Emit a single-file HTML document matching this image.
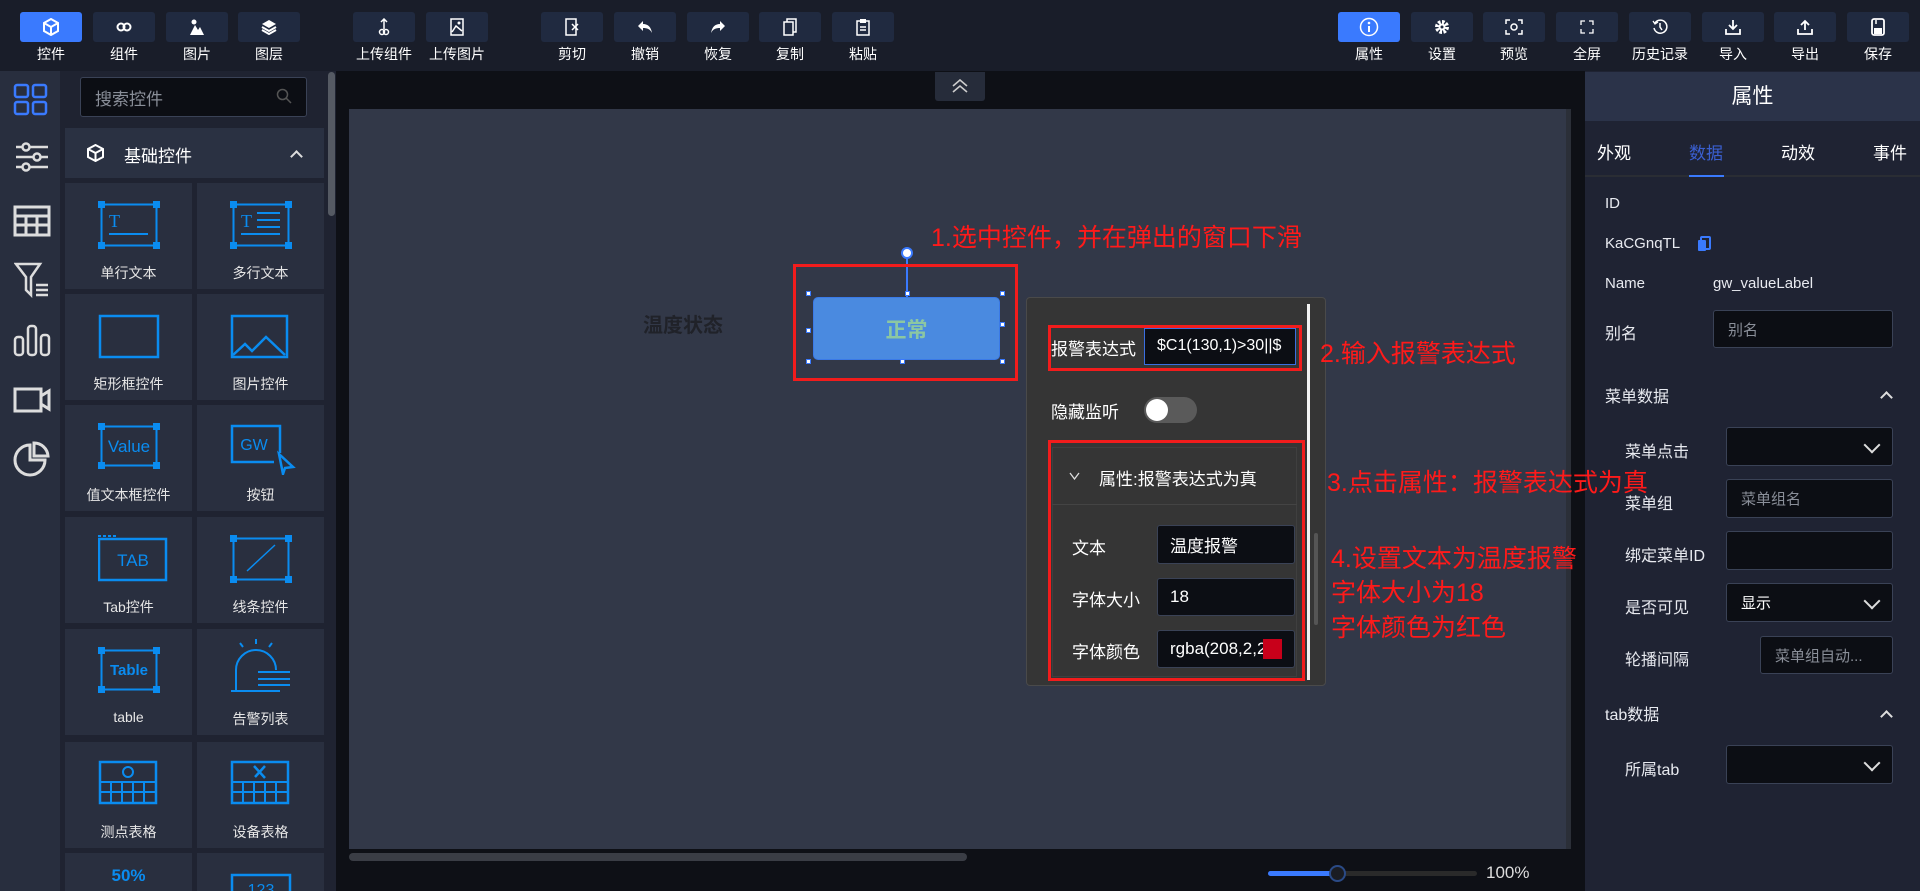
<!DOCTYPE html>
<html><head><meta charset="utf-8">
<style>
*{margin:0;padding:0;box-sizing:border-box}
html{width:1920px;height:891px;overflow:hidden}
body{width:1920px;height:891px;overflow:hidden;background:#0e1016;font-family:"Liberation Sans","Noto Sans CJK SC",sans-serif;color:#e8eaf0;position:relative;font-size:15px}
.a{position:absolute}
.tb{position:absolute;left:0;top:0;width:1920px;height:71px;background:#191d29}
.btn{position:absolute;top:12px;width:62px;height:30px;background:#202a40;border-radius:3px;display:flex;align-items:center;justify-content:center}
.btn.on{background:#3a7afe}
.lbl{position:absolute;top:44px;width:80px;text-align:center;font-size:14px;color:#fff}
.rail{position:absolute;left:0;top:71px;width:60px;height:820px;background:#282e3e}
.pan{position:absolute;left:60px;top:71px;width:276px;height:820px;background:#1f2331;overflow:hidden}
.card{position:absolute;width:127px;height:106px;background:#292f3f}
.card svg{position:absolute;left:33px;top:18px}
.card span{position:absolute;left:0;right:0;top:80px;text-align:center;font-size:14px;color:#e6e6e6}
.rp{position:absolute;left:1585px;top:71px;width:335px;height:820px;background:#1f2333}
.inp{position:absolute;background:#0c0e14;border:1px solid #3a4256;border-radius:3px;font-size:15px;color:#8a8f99;padding-left:12px;display:flex;align-items:center}
.red{position:absolute;border:3px solid #f21c1c}
.ann{position:absolute;color:#ff1a1a;font-size:25px;white-space:nowrap;line-height:1}
.chev{position:absolute;right:14px;top:11px;width:12px;height:12px;border-right:2px solid #ddd;border-bottom:2px solid #ddd;transform:rotate(45deg)}
.up{position:absolute;width:9px;height:9px;border-left:2px solid #ddd;border-top:2px solid #ddd;transform:rotate(45deg)}
.h{position:absolute;width:5px;height:5px;background:#fff;border:1px solid #3a7afe}
</style></head><body>
<div class="tb"></div>
<div class="btn on" style="left:20px"><svg width="16" height="18" viewBox="0 0 16 18"><path d="M8 1 L15 5 V13 L8 17 L1 13 V5 Z M1 5 L8 9 L15 5 M8 9 V17" fill="none" stroke="#fff" stroke-width="2"/></svg></div>
<div class="btn" style="left:93px"><svg width="16" height="10"><circle cx="5" cy="5" r="3.5" fill="none" stroke="#fff" stroke-width="2"/><circle cx="11" cy="5" r="3.5" fill="none" stroke="#fff" stroke-width="2"/></svg></div>
<div class="btn" style="left:166px"><svg width="14" height="16"><circle cx="4" cy="3" r="2.5" fill="#fff"/><path d="M0 16 L5 6 L8 11 L10 8 L14 16Z" fill="#fff"/></svg></div>
<div class="btn" style="left:238px"><svg width="16" height="16"><path d="M8 1 L15 5 L8 9 L1 5Z" fill="#fff"/><path d="M1 8 L8 12 L15 8 M1 11 L8 15 L15 11" fill="none" stroke="#fff" stroke-width="2"/></svg></div>
<div class="btn" style="left:353px"><svg width="12" height="18"><path d="M6 1 V11 M3 4 L6 1 L9 4" fill="none" stroke="#fff" stroke-width="1.5"/><circle cx="4" cy="14" r="2.5" fill="none" stroke="#fff" stroke-width="1.5"/><circle cx="8" cy="14" r="2.5" fill="none" stroke="#fff" stroke-width="1.5"/></svg></div>
<div class="btn" style="left:426px"><svg width="14" height="18"><rect x="1" y="1" width="12" height="16" fill="none" stroke="#fff" stroke-width="1.5"/><path d="M2 14 L6 8 L12 13" fill="none" stroke="#fff" stroke-width="1.5"/><circle cx="9" cy="5" r="1.5" fill="#fff"/></svg></div>
<div class="btn" style="left:541px"><svg width="14" height="18"><rect x="1" y="1" width="10" height="16" fill="none" stroke="#fff" stroke-width="1.5"/><path d="M7 6 L13 12 M13 6 L7 12" stroke="#fff" stroke-width="1.5"/></svg></div>
<div class="btn" style="left:614px"><svg width="16" height="14"><path d="M6 1 L1 6 L6 11 V8 C10 8 13 9 15 13 C14 7 11 4 6 4Z" fill="#fff"/></svg></div>
<div class="btn" style="left:687px"><svg width="16" height="14"><path d="M10 1 L15 6 L10 11 V8 C6 8 3 9 1 13 C2 7 5 4 10 4Z" fill="#fff"/></svg></div>
<div class="btn" style="left:759px"><svg width="14" height="18"><rect x="4" y="1" width="9" height="13" fill="none" stroke="#fff" stroke-width="1.5"/><rect x="1" y="4" width="9" height="13" fill="#202a40" stroke="#fff" stroke-width="1.5"/></svg></div>
<div class="btn" style="left:832px"><svg width="14" height="18"><rect x="1" y="3" width="12" height="14" fill="none" stroke="#fff" stroke-width="1.5"/><rect x="4" y="1" width="6" height="4" fill="#fff"/><path d="M4 9 H10 M4 12 H10" stroke="#fff" stroke-width="1.5"/></svg></div>
<div class="btn on" style="left:1338px"><svg width="20" height="20"><circle cx="10" cy="10" r="8.5" fill="none" stroke="#fff" stroke-width="1.5"/><circle cx="10" cy="6" r="1.3" fill="#fff"/><path d="M10 9 V15" stroke="#fff" stroke-width="2"/></svg></div>
<div class="btn" style="left:1411px"><svg width="16" height="16"><circle cx="8" cy="8" r="5" fill="none" stroke="#fff" stroke-width="4" stroke-dasharray="2.5 1.4"/><circle cx="8" cy="8" r="3.5" fill="#fff"/><circle cx="8" cy="8" r="1.5" fill="#202a40"/></svg></div>
<div class="btn" style="left:1483px"><svg width="18" height="16"><path d="M1 5 V1 H5 M13 1 H17 V5 M17 11 V15 H13 M5 15 H1 V11" fill="none" stroke="#fff" stroke-width="1.5"/><circle cx="9" cy="8" r="3" fill="none" stroke="#fff" stroke-width="1.5"/></svg></div>
<div class="btn" style="left:1556px"><svg width="14" height="14"><path d="M1 5 V1 H5 M9 1 H13 V5 M13 9 V13 H9 M5 13 H1 V9" fill="none" stroke="#fff" stroke-width="1.3"/></svg></div>
<div class="btn" style="left:1629px"><svg width="16" height="16"><path d="M3 4 A6.5 6.5 0 1 1 2 9" fill="none" stroke="#fff" stroke-width="1.5"/><path d="M1 2 L3 5 L6 3" fill="none" stroke="#fff" stroke-width="1.3"/><path d="M8 4 V8 L10 11" fill="none" stroke="#fff" stroke-width="1.5"/></svg></div>
<div class="btn" style="left:1702px"><svg width="16" height="16"><path d="M8 1 V10 M4 6 L8 10 L12 6 M1 10 V15 H15 V10" fill="none" stroke="#fff" stroke-width="1.8"/></svg></div>
<div class="btn" style="left:1774px"><svg width="16" height="16"><path d="M8 11 V2 M4 6 L8 2 L12 6 M1 10 V15 H15 V10" fill="none" stroke="#fff" stroke-width="1.8"/></svg></div>
<div class="btn" style="left:1847px"><svg width="14" height="18"><rect x="1" y="1" width="12" height="16" rx="2" fill="none" stroke="#fff" stroke-width="1.8"/><rect x="3" y="10" width="8" height="6" fill="#fff"/><path d="M5 2 V6" stroke="#fff" stroke-width="1.5"/></svg></div>
<div class="lbl" style="left:11px">控件</div><div class="lbl" style="left:84px">组件</div><div class="lbl" style="left:157px">图片</div><div class="lbl" style="left:229px">图层</div>
<div class="lbl" style="left:344px">上传组件</div><div class="lbl" style="left:417px">上传图片</div>
<div class="lbl" style="left:532px">剪切</div><div class="lbl" style="left:605px">撤销</div><div class="lbl" style="left:678px">恢复</div><div class="lbl" style="left:750px">复制</div><div class="lbl" style="left:823px">粘贴</div>
<div class="lbl" style="left:1329px">属性</div><div class="lbl" style="left:1402px">设置</div><div class="lbl" style="left:1474px">预览</div><div class="lbl" style="left:1547px">全屏</div><div class="lbl" style="left:1620px">历史记录</div><div class="lbl" style="left:1693px">导入</div><div class="lbl" style="left:1765px">导出</div><div class="lbl" style="left:1838px">保存</div>

<div class="rail"></div>
<svg class="a" style="left:13px;top:83px" width="36" height="34"><g fill="none" stroke="#3a7afe" stroke-width="2.5"><rect x="2" y="2" width="13" height="12" rx="2"/><rect x="20" y="2" width="13" height="12" rx="2"/><rect x="2" y="19" width="13" height="12" rx="2"/><rect x="20" y="19" width="13" height="12" rx="2"/></g></svg>
<svg class="a" style="left:15px;top:142px" width="34" height="30"><g fill="none" stroke="#ddd" stroke-width="2.5"><path d="M1 5 H33 M1 15 H33 M1 25 H33"/><circle cx="11" cy="5" r="3.5" fill="#282e3e"/><circle cx="22" cy="15" r="3.5" fill="#282e3e"/><circle cx="11" cy="25" r="3.5" fill="#282e3e"/></g></svg>
<svg class="a" style="left:13px;top:205px" width="38" height="32"><g fill="none" stroke="#ddd" stroke-width="3"><rect x="2" y="2" width="34" height="28"/><path d="M2 11 H36 M2 20 H36 M13 11 V30 M24 11 V30"/></g></svg>
<svg class="a" style="left:14px;top:262px" width="36" height="36"><g fill="none" stroke="#ddd" stroke-width="2.5"><path d="M2 2 H26 L17 15 V33 L12 28 V15 Z"/><path d="M22 23 H34 M22 28 H34 M22 33 H34"/></g></svg>
<svg class="a" style="left:13px;top:323px" width="38" height="34"><g fill="none" stroke="#ddd" stroke-width="2.5"><rect x="2" y="14" width="8" height="18" rx="3"/><rect x="15" y="3" width="8" height="29" rx="3"/><rect x="28" y="12" width="8" height="20" rx="3"/></g></svg>
<svg class="a" style="left:13px;top:387px" width="38" height="26"><g fill="none" stroke="#ddd" stroke-width="3"><rect x="2" y="2" width="26" height="22"/><path d="M28 9 L36 4 V22 L28 17"/></g></svg>
<svg class="a" style="left:13px;top:441px" width="38" height="36"><g fill="none" stroke="#ddd" stroke-width="3"><path d="M17 4 A15 15 0 1 0 32 19 H17 Z"/><path d="M21 2 A14 14 0 0 1 35 15 H21 Z"/></g></svg>

<div class="pan">
<div class="inp" style="left:20px;top:6px;width:227px;height:40px;color:#8a8f99;font-size:17px;padding-left:14px">搜索控件</div>
<svg class="a" style="left:216px;top:17px" width="16" height="16"><circle cx="6.5" cy="6.5" r="5" fill="none" stroke="#555" stroke-width="1.5"/><path d="M10 10 L15 15" stroke="#555" stroke-width="1.5"/></svg>
<div class="a" style="left:5px;top:57px;width:259px;height:50px;background:#2a3142"></div>
<svg class="a" style="left:27px;top:73px" width="17" height="18"><path d="M8.5 1 L16 5 V13 L8.5 17 L1 13 V5 Z M1 5 L8.5 9 L16 5 M8.5 9 V17" fill="none" stroke="#fff" stroke-width="2"/></svg>
<div class="a" style="left:64px;top:71px;font-size:17px;color:#fff">基础控件</div>
<div class="up" style="left:232px;top:81px"></div>
<div class="a" style="left:268px;top:1px;width:7px;height:144px;background:#555a63;border-radius:4px"></div>

<div class="card" style="left:5px;top:112px"><svg width="62" height="48"><g fill="#0a8cf0"><rect x="0" y="0" width="7" height="7"/><rect x="55" y="0" width="7" height="7"/><rect x="0" y="41" width="7" height="7"/><rect x="55" y="41" width="7" height="7"/></g><rect x="3.5" y="3.5" width="55" height="41" fill="none" stroke="#0a8cf0" stroke-width="2"/><text x="11" y="26" fill="#0a8cf0" font-size="18" font-family="Liberation Serif">T</text><path d="M11 33 H50" stroke="#0a8cf0" stroke-width="2"/></svg><span>单行文本</span></div>
<div class="card" style="left:137px;top:112px"><svg width="62" height="48"><g fill="#0a8cf0"><rect x="0" y="0" width="7" height="7"/><rect x="55" y="0" width="7" height="7"/><rect x="0" y="41" width="7" height="7"/><rect x="55" y="41" width="7" height="7"/></g><rect x="3.5" y="3.5" width="55" height="41" fill="none" stroke="#0a8cf0" stroke-width="2"/><text x="11" y="26" fill="#0a8cf0" font-size="18" font-family="Liberation Serif">T</text><path d="M27 12 H50 M27 19 H50 M27 26 H50 M11 33 H50" stroke="#0a8cf0" stroke-width="2"/></svg><span>多行文本</span></div>
<div class="card" style="left:5px;top:223px"><svg width="62" height="48"><rect x="2" y="4" width="58" height="41" fill="none" stroke="#0a8cf0" stroke-width="2.5"/></svg><span>矩形框控件</span></div>
<div class="card" style="left:137px;top:223px"><svg width="62" height="48"><rect x="2" y="4" width="55" height="41" fill="none" stroke="#0a8cf0" stroke-width="2.5"/><path d="M3 43 L15 32 L22 39 L36 25 L55 43" fill="none" stroke="#0a8cf0" stroke-width="2.5"/></svg><span>图片控件</span></div>
<div class="card" style="left:5px;top:334px"><svg width="62" height="48"><g fill="#0a8cf0"><rect x="0" y="0" width="7" height="7"/><rect x="55" y="0" width="7" height="7"/><rect x="0" y="39" width="7" height="7"/><rect x="55" y="39" width="7" height="7"/></g><rect x="3.5" y="3.5" width="55" height="39" fill="none" stroke="#0a8cf0" stroke-width="2"/><text x="31" y="29" text-anchor="middle" fill="#0a8cf0" font-size="17" font-family="Liberation Sans">Value</text></svg><span>值文本框控件</span></div>
<div class="card" style="left:137px;top:334px"><svg width="66" height="52"><path d="M50 30 V3 H2 V39 H44" fill="none" stroke="#0a8cf0" stroke-width="2.5"/><text x="24" y="27" text-anchor="middle" fill="#0a8cf0" font-size="16" font-family="Liberation Sans">GW</text><path d="M49 31 L63 44 L55 45 L53 51 Z" fill="none" stroke="#0a8cf0" stroke-width="2.5"/></svg><span>按钮</span></div>
<div class="card" style="left:5px;top:446px"><svg width="70" height="48"><g fill="#0a8cf0"><rect x="0" y="0" width="3" height="2"/><rect x="5" y="0" width="3" height="2"/><rect x="10" y="0" width="3" height="2"/><rect x="15" y="0" width="3" height="2"/></g><rect x="1" y="4" width="67" height="41" fill="none" stroke="#0a8cf0" stroke-width="2.5"/><text x="35" y="31" text-anchor="middle" fill="#0a8cf0" font-size="17" font-family="Liberation Sans">TAB</text></svg><span>Tab控件</span></div>
<div class="card" style="left:137px;top:446px"><svg width="62" height="48"><g fill="#0a8cf0"><rect x="0" y="0" width="7" height="7"/><rect x="55" y="0" width="7" height="7"/><rect x="0" y="41" width="7" height="7"/><rect x="55" y="41" width="7" height="7"/></g><rect x="3.5" y="3.5" width="55" height="41" fill="none" stroke="#0a8cf0" stroke-width="2"/><path d="M17 36 L45 10" stroke="#0a8cf0" stroke-width="1.5"/></svg><span>线条控件</span></div>
<div class="card" style="left:5px;top:558px"><svg width="62" height="48"><g fill="#0a8cf0"><rect x="0" y="0" width="7" height="7"/><rect x="55" y="0" width="7" height="7"/><rect x="0" y="39" width="7" height="7"/><rect x="55" y="39" width="7" height="7"/></g><rect x="3.5" y="3.5" width="55" height="39" fill="none" stroke="#0a8cf0" stroke-width="2"/><text x="31" y="28" text-anchor="middle" fill="#0a8cf0" font-size="15" font-weight="bold" font-family="Liberation Sans">Table</text></svg><span>table</span></div>
<div class="card" style="left:137px;top:558px"><svg width="62" height="58" style="top:10px"><path d="M10 4 L13 8 M26 0 V5 M42 4 L39 8" stroke="#0a8cf0" stroke-width="2"/><path d="M6 51 V31 A20 20 0 0 1 46 31" fill="none" stroke="#0a8cf0" stroke-width="2"/><path d="M1 52 H50 M28 33 H60 M28 40 H60 M28 46 H60" stroke="#0a8cf0" stroke-width="2"/></svg><span>告警列表</span></div>
<div class="card" style="left:5px;top:671px"><svg width="62" height="48"><rect x="2" y="2" width="56" height="41" fill="none" stroke="#0a8cf0" stroke-width="2.5"/><path d="M2 22 H58 M2 32 H58 M13 22 V43 M24 22 V43 M35 22 V43 M46 22 V43" stroke="#0a8cf0" stroke-width="2"/><circle cx="30" cy="12" r="5" fill="none" stroke="#0a8cf0" stroke-width="2"/></svg><span>测点表格</span></div>
<div class="card" style="left:137px;top:671px"><svg width="62" height="48"><rect x="2" y="2" width="56" height="41" fill="none" stroke="#0a8cf0" stroke-width="2.5"/><path d="M2 22 H58 M2 32 H58 M13 22 V43 M24 22 V43 M35 22 V43 M46 22 V43" stroke="#0a8cf0" stroke-width="2"/><path d="M24 6 L35 18 M35 6 L25 17" stroke="#0a8cf0" stroke-width="2.5"/></svg><span>设备表格</span></div>
<div class="card" style="left:5px;top:782px"><div class="a" style="left:0;right:0;top:13px;text-align:center;color:#0a8cf0;font-size:17px;font-weight:bold">50%</div></div>
<div class="card" style="left:137px;top:782px"><svg width="62" height="48" style="top:20px"><rect x="2" y="2" width="58" height="40" fill="none" stroke="#0a8cf0" stroke-width="2.5"/><text x="31" y="22" text-anchor="middle" fill="#0a8cf0" font-size="16" font-family="Liberation Sans">123</text></svg></div>
</div>

<div class="a" style="left:935px;top:72px;width:50px;height:29px;background:#262c3a;border-radius:0 0 3px 3px"></div>
<svg class="a" style="left:951px;top:79px" width="18" height="14"><path d="M2 7 L9 1 L16 7 M2 13 L9 7 L16 13" fill="none" stroke="#ccc" stroke-width="1.6"/></svg>
<div class="a" style="left:349px;top:109px;width:1222px;height:740px;background:#323848"></div>
<div class="a" style="left:1566px;top:109px;width:5px;height:740px;background:#2b2f38"></div>
<div class="a" style="left:349px;top:853px;width:618px;height:8px;background:#3a3d45;border-radius:4px"></div>
<div class="a" style="left:1268px;top:871px;width:209px;height:5px;background:#2a2a2a;border-radius:3px"></div>
<div class="a" style="left:1268px;top:871px;width:70px;height:5px;background:#3a7afe;border-radius:3px"></div>
<div class="a" style="left:1329px;top:865px;width:17px;height:17px;border-radius:50%;background:#1a1c22;border:2px solid #2a4a86"></div>
<div class="a" style="left:1486px;top:863px;font-size:17px;color:#ddd">100%</div>

<div class="a" style="left:643px;top:309px;font-size:20px;font-weight:bold;color:#202229">温度状态</div>
<div class="a" style="left:813px;top:297px;width:187px;height:63px;background:#4a8ae0;border-radius:5px;border:1px solid #3a7ae8;display:flex;align-items:center;justify-content:center;font-size:21px;font-weight:bold;color:#8cc7a2">正常</div>
<div class="a" style="left:906px;top:257px;width:2px;height:40px;background:#3a7afe"></div>
<div class="a" style="left:901px;top:247px;width:12px;height:12px;border-radius:50%;background:#fff;border:2px solid #3a7afe"></div>
<div class="h" style="left:806px;top:291px"></div><div class="h" style="left:905px;top:291px"></div><div class="h" style="left:1000px;top:291px"></div>
<div class="h" style="left:806px;top:328px"></div><div class="h" style="left:1000px;top:322px"></div>
<div class="h" style="left:806px;top:359px"></div><div class="h" style="left:900px;top:359px"></div><div class="h" style="left:1000px;top:359px"></div>
<div class="red" style="left:793px;top:264px;width:225px;height:117px"></div>

<div class="a" style="left:1026px;top:297px;width:300px;height:389px;background:#353535;border:1px solid #4a4a4a;border-radius:4px"></div>
<div class="a" style="left:1307px;top:304px;width:3px;height:376px;background:#f2f2f2"></div>
<div class="a" style="left:1314px;top:533px;width:4px;height:92px;background:#555;border-radius:2px"></div>
<div class="a" style="left:1051px;top:335px;font-size:17px;color:#fff">报警表达式</div>
<div class="a" style="left:1144px;top:328px;width:152px;height:37px;background:#0c0e14;border:1px solid #3a6ee0;color:#fff;font-size:16px;padding:8px 0 0 12px;overflow:hidden;white-space:nowrap">$C1(130,1)&gt;30||$</div>
<div class="red" style="left:1048px;top:325px;width:254px;height:46px"></div>
<div class="a" style="left:1051px;top:398px;font-size:17px;color:#fff">隐藏监听</div>
<div class="a" style="left:1144px;top:397px;width:53px;height:26px;background:#5a5a5a;border-radius:13px"></div>
<div class="a" style="left:1146px;top:399px;width:22px;height:22px;background:#fff;border-radius:50%"></div>
<div class="a" style="left:1052px;top:447px;width:245px;height:230px;border:1px solid #3f3f3f"></div>
<div class="a" style="left:1052px;top:504px;width:245px;height:1px;background:#444"></div>
<svg class="a" style="left:1069px;top:472px" width="11" height="8"><path d="M1 1 L5.5 7 L10 1" fill="none" stroke="#ddd" stroke-width="1.3"/></svg>
<div class="a" style="left:1099px;top:465px;font-size:17px;color:#fff">属性:报警表达式为真</div>
<div class="a" style="left:1072px;top:534px;font-size:17px;color:#fff">文本</div>
<div class="inp" style="left:1157px;top:525px;width:138px;height:39px;color:#fff;font-size:17px">温度报警</div>
<div class="a" style="left:1072px;top:586px;font-size:17px;color:#fff">字体大小</div>
<div class="inp" style="left:1157px;top:578px;width:138px;height:38px;color:#fff;font-size:17px">18</div>
<div class="a" style="left:1072px;top:638px;font-size:17px;color:#fff">字体颜色</div>
<div class="inp" style="left:1157px;top:630px;width:138px;height:38px;color:#fff;font-size:17px;overflow:hidden;white-space:nowrap">rgba(208,2,2</div>
<div class="a" style="left:1263px;top:639px;width:19px;height:20px;background:#c8001a"></div>
<div class="red" style="left:1048px;top:440px;width:257px;height:241px"></div>

<div class="rp"></div>
<div class="a" style="left:1585px;top:72px;width:335px;height:49px;background:#2b3349;text-align:center;font-size:21px;color:#fff;line-height:49px">属性</div>
<div class="a" style="left:1585px;top:175px;width:335px;height:2px;background:#2a2d34"></div>
<div class="a" style="left:1597px;top:139px;font-size:17px;color:#fff">外观</div>
<div class="a" style="left:1689px;top:139px;font-size:17px;color:#3a5fd0">数据</div>
<div class="a" style="left:1781px;top:139px;font-size:17px;color:#fff">动效</div>
<div class="a" style="left:1873px;top:139px;font-size:17px;color:#fff">事件</div>
<div class="a" style="left:1689px;top:175px;width:35px;height:2px;background:#3a7afe"></div>
<div class="a" style="left:1605px;top:195px;font-size:15px">ID</div>
<div class="a" style="left:1605px;top:235px;font-size:15px">KaCGnqTL</div>
<svg class="a" style="left:1697px;top:236px" width="14" height="16"><rect x="4" y="1" width="9" height="12" rx="1" fill="none" stroke="#3a7afe" stroke-width="2"/><rect x="1" y="4" width="8" height="11" rx="1" fill="#3a7afe"/></svg>
<div class="a" style="left:1605px;top:275px;font-size:15px">Name</div>
<div class="a" style="left:1713px;top:275px;font-size:15px">gw_valueLabel</div>
<div class="a" style="left:1605px;top:320px;font-size:16px">别名</div>
<div class="inp" style="left:1713px;top:310px;width:180px;height:38px;padding-left:14px">别名</div>
<div class="a" style="left:1605px;top:383px;font-size:16px">菜单数据</div>
<div class="up" style="left:1882px;top:393px"></div>
<div class="a" style="left:1625px;top:438px;font-size:16px">菜单点击</div>
<div class="inp" style="left:1726px;top:427px;width:167px;height:39px"><div class="chev"></div></div>
<div class="a" style="left:1625px;top:490px;font-size:16px">菜单组</div>
<div class="inp" style="left:1726px;top:479px;width:167px;height:39px;padding-left:14px">菜单组名</div>
<div class="a" style="left:1625px;top:542px;font-size:16px">绑定菜单ID</div>
<div class="inp" style="left:1726px;top:531px;width:167px;height:39px"></div>
<div class="a" style="left:1625px;top:594px;font-size:16px">是否可见</div>
<div class="inp" style="left:1726px;top:583px;width:167px;height:39px;color:#fff;padding-left:14px">显示<div class="chev"></div></div>
<div class="a" style="left:1625px;top:646px;font-size:16px">轮播间隔</div>
<div class="inp" style="left:1760px;top:636px;width:133px;height:38px;padding-left:14px;white-space:nowrap">菜单组自动...</div>
<div class="a" style="left:1605px;top:701px;font-size:16px">tab数据</div>
<div class="up" style="left:1882px;top:712px"></div>
<div class="a" style="left:1625px;top:756px;font-size:16px">所属tab</div>
<div class="inp" style="left:1726px;top:745px;width:167px;height:39px"><div class="chev"></div></div>

<div class="ann" style="left:931px;top:226px">1.选中控件，并在弹出的窗口下滑</div>
<div class="ann" style="left:1320px;top:342px">2.输入报警表达式</div>
<div class="ann" style="left:1327px;top:471px">3.点击属性：报警表达式为真</div>
<div class="ann" style="left:1331px;top:547px">4.设置文本为温度报警</div>
<div class="ann" style="left:1331px;top:581px">字体大小为18</div>
<div class="ann" style="left:1331px;top:616px">字体颜色为红色</div>
</body></html>
